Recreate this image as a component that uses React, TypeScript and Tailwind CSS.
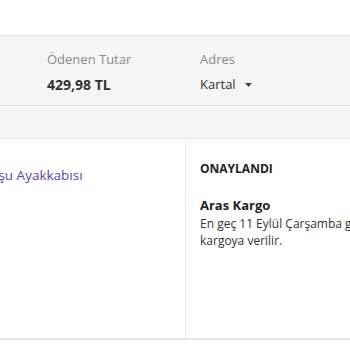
export default function App() {
  return (
    <div className="w-[350px] h-[350px] overflow-hidden bg-white font-['Open_Sans',sans-serif]">
      {/* üst boşluk */}
      <div className="h-[35px]" />

      {/* sipariş özeti */}
      <div className="h-[71px] border-y border-[#e3e3e3] bg-[#f5f5f5] flex pl-[47px] pt-[13px]">
        <div className="w-[153px]">
          <p className="text-[13px] leading-[20px] text-[#8a8a8a]">Ödenen Tutar</p>
          <p className="mt-[6px] text-[14px] leading-[20px] font-bold text-[#333]">429,98 TL</p>
        </div>
        <div>
          <p className="text-[13px] leading-[20px] text-[#8a8a8a]">Adres</p>
          <div className="mt-[5px] flex items-center gap-[9px]">
            <span className="text-[13px] leading-[20px] text-[#333]">Kartal</span>
            <svg width="7" height="4" viewBox="0 0 7 4" className="mt-[1px]">
              <path d="M0 0h7L3.5 4z" fill="#444" />
            </svg>
          </div>
        </div>
      </div>

      {/* gri ara bant */}
      <div className="h-[33px] bg-[#f5f5f5] border-b border-[#e3e3e3]" />

      {/* ürün ve kargo */}
      <div className="h-[201px] flex border-b-2 border-[#e6e6e6]">
        <div className="w-[186px] border-r border-[#ececec] pt-[26px] overflow-hidden">
          <p className="ml-[-18px] whitespace-nowrap text-[13.5px] leading-[20px] text-[#5f3ea3]">Koşu Ayakkabısı</p>
        </div>
        <div className="flex-1 pl-[14px] pt-[20px] overflow-hidden">
          <p className="text-[12px] leading-[20px] font-bold text-[#222]">ONAYLANDI</p>
          <p className="mt-[16px] text-[13px] leading-[20px] font-bold text-[#222]">Aras Kargo</p>
          <p className="text-[12px] leading-[17px] text-[#333] whitespace-nowrap">
            En geç 11 Eylül Çarşamba günü
            <br />
            kargoya verilir.
          </p>
        </div>
      </div>
    </div>
  );
}
